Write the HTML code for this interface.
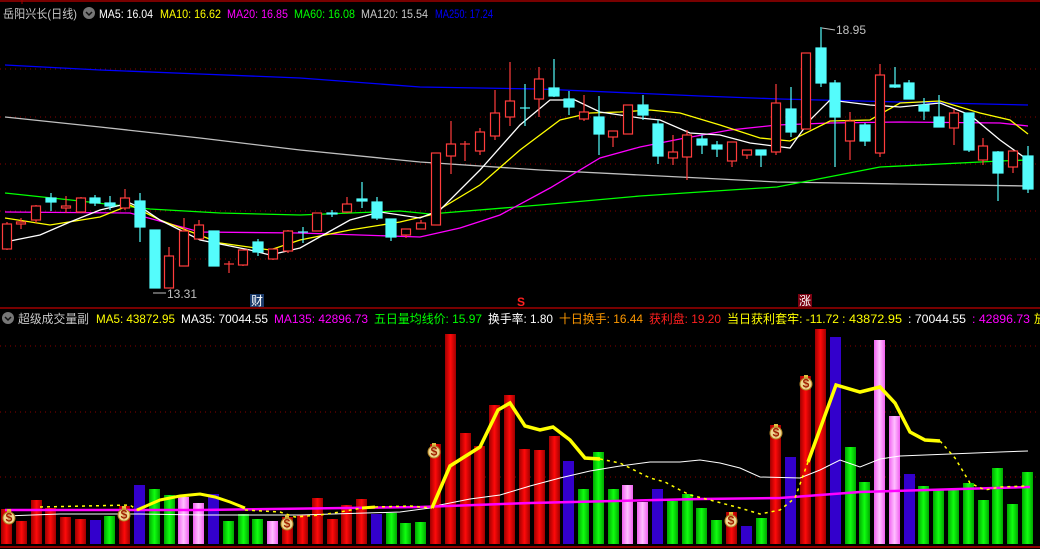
<!DOCTYPE html>
<html><head><meta charset="utf-8"><style>
html,body{margin:0;padding:0;background:#000;}
svg{display:block;}
text{font-family:"Liberation Sans","Noto Sans CJK SC",sans-serif;font-size:12px;}
</style></head><body>
<svg width="1040" height="549" viewBox="0 0 1040 549" xmlns="http://www.w3.org/2000/svg">
<defs>
<linearGradient id="gr" x1="0" x2="1"><stop offset="0" stop-color="#a00000"/><stop offset="0.5" stop-color="#ff0a0a"/><stop offset="1" stop-color="#a00000"/></linearGradient>
<linearGradient id="gg" x1="0" x2="1"><stop offset="0" stop-color="#00a800"/><stop offset="0.5" stop-color="#10ff10"/><stop offset="1" stop-color="#00a800"/></linearGradient>
<linearGradient id="gp" x1="0" x2="1"><stop offset="0" stop-color="#f060f0"/><stop offset="0.5" stop-color="#ffc0ff"/><stop offset="1" stop-color="#f060f0"/></linearGradient>
</defs>
<rect width="1040" height="549" fill="#000"/>
<line x1="0" y1="1" x2="1040" y2="1" stroke="#a00000" stroke-width="1.5"/>
<line x1="22" y1="0" x2="22" y2="4" stroke="#a00000"/>
<g stroke="#8a0000" stroke-dasharray="1,4" stroke-width="1">
<line x1="0" y1="69" x2="1040" y2="69"/><line x1="0" y1="117" x2="1040" y2="117"/><line x1="0" y1="164" x2="1040" y2="164"/><line x1="0" y1="211" x2="1040" y2="211"/><line x1="0" y1="259" x2="1040" y2="259"/>
<line x1="0" y1="346" x2="1040" y2="346"/><line x1="0" y1="412" x2="1040" y2="412"/><line x1="0" y1="477" x2="1040" y2="477"/>
</g>
<line x1="0" y1="308" x2="1040" y2="308" stroke="#a00000" stroke-width="1.5"/>
<line x1="0" y1="547" x2="1040" y2="547" stroke="#c00000" stroke-width="1.5"/>

<g fill="none" stroke-width="1.3">
<polyline stroke="#0000ff" points="5,65 100,70 200,74 300,78 420,87 540,89 700,96 780,99 900,102 1028,105"/>
<polyline stroke="#c0c0c0" points="5,117 100,127 200,138 300,150 420,162 540,170 640,175 700,178 777,182 900,184 1028,186"/>
<polyline stroke="#00ff00" points="5,193 80,201 150,209 220,213 300,215 400,211 430,214 540,205 640,196 700,192 777,187 880,167 1000,161 1028,160"/>
<polyline stroke="#ff00ff" points="5,212 130,213 200,232 300,233 420,237 460,228 500,215 550,188 600,158 640,147 680,139 730,130 777,125 830,123 900,122 1000,123 1028,126"/>
<polyline stroke="#ffff00" points="5,218 50,225 100,217 130,205 160,220 220,243 270,250 300,240 350,230 400,222 430,215 480,185 520,150 560,120 590,113 620,112 650,110 680,113 720,125 760,138 790,141 830,121 870,120 900,103 940,101 980,113 1010,120 1028,134"/>
<polyline stroke="#ffffff" points="5,242 40,235 70,222 100,210 130,203 145,210 160,220 200,240 250,250 270,255 300,248 350,220 380,212 420,218 440,210 480,170 520,125 550,100 575,100 600,112 640,118 660,120 690,133 720,135 750,143 790,148 810,120 830,100 870,105 900,107 940,103 970,115 1000,140 1028,160"/>
</g>

<g stroke="#ff3c3c" stroke-width="1.2" fill="#000">
<line x1="7" y1="222" x2="7" y2="250"/><rect x="2.5" y="224" width="9" height="25"/>
<line x1="21" y1="218" x2="21" y2="229"/><rect x="16.5" y="222" width="9" height="2"/>
<line x1="36" y1="205" x2="36" y2="223"/><rect x="31.5" y="206" width="9" height="14"/>
<line x1="66" y1="196" x2="66" y2="213"/><rect x="61.5" y="206" width="9" height="2"/>
<line x1="81" y1="197" x2="81" y2="213"/><rect x="76.5" y="198" width="9" height="14"/>
<line x1="125" y1="189" x2="125" y2="210"/><rect x="120.5" y="198" width="9" height="10"/>
<line x1="169" y1="247" x2="169" y2="288"/><rect x="164.5" y="256" width="9" height="32"/>
<line x1="184" y1="218" x2="184" y2="266"/><rect x="179.5" y="231" width="9" height="35"/>
<line x1="199" y1="220" x2="199" y2="239"/><rect x="194.5" y="225" width="9" height="14"/>
<line x1="229" y1="261" x2="229" y2="273"/><line x1="224" y1="264" x2="234" y2="264"/>
<line x1="243" y1="250" x2="243" y2="266"/><rect x="238.5" y="250" width="9" height="15"/>
<line x1="273" y1="249" x2="273" y2="260"/><rect x="268.5" y="249" width="9" height="10"/>
<line x1="288" y1="230" x2="288" y2="253"/><rect x="283.5" y="231" width="9" height="20"/>
<rect x="312.5" y="213" width="9" height="18"/>
<line x1="347" y1="197" x2="347" y2="213"/><rect x="342.5" y="204" width="9" height="8"/>
<line x1="406" y1="229" x2="406" y2="238"/><rect x="401.5" y="229" width="9" height="6"/>
<line x1="421" y1="220" x2="421" y2="229"/><rect x="416.5" y="223" width="9" height="6"/>
<rect x="431.5" y="153" width="9" height="72"/>
<line x1="451" y1="121" x2="451" y2="174"/><rect x="446.5" y="144" width="9" height="12"/>
<line x1="465" y1="141" x2="465" y2="161"/><line x1="460" y1="144" x2="470" y2="144"/>
<line x1="480" y1="128" x2="480" y2="155"/><rect x="475.5" y="132" width="9" height="19"/>
<line x1="495" y1="90" x2="495" y2="140"/><rect x="490.5" y="113" width="9" height="23"/>
<line x1="510" y1="62" x2="510" y2="126"/><rect x="505.5" y="101" width="9" height="16"/>
<line x1="539" y1="67" x2="539" y2="117"/><rect x="534.5" y="79" width="9" height="20"/>
<line x1="584" y1="95" x2="584" y2="121"/><rect x="579.5" y="112" width="9" height="7"/>
<line x1="613" y1="131" x2="613" y2="147"/><rect x="608.5" y="131" width="9" height="6"/>
<rect x="623.5" y="105" width="9" height="29"/>
<line x1="673" y1="135" x2="673" y2="165"/><rect x="668.5" y="152" width="9" height="6"/>
<line x1="687" y1="130" x2="687" y2="180"/><rect x="682.5" y="135" width="9" height="22"/>
<line x1="732" y1="142" x2="732" y2="167"/><rect x="727.5" y="142" width="9" height="19"/>
<line x1="747" y1="150" x2="747" y2="159"/><rect x="742.5" y="150" width="9" height="5"/>
<line x1="776" y1="84" x2="776" y2="155"/><rect x="771.5" y="103" width="9" height="49"/>
<rect x="801.5" y="53" width="9" height="76"/>
<line x1="850" y1="112" x2="850" y2="160"/><rect x="845.5" y="121" width="9" height="20"/>
<line x1="880" y1="64" x2="880" y2="157"/><rect x="875.5" y="75" width="9" height="78"/>
<line x1="954" y1="109" x2="954" y2="145"/><rect x="949.5" y="113" width="9" height="15"/>
<line x1="983" y1="138" x2="983" y2="165"/><rect x="978.5" y="146" width="9" height="14"/>
<line x1="1013" y1="151" x2="1013" y2="173"/><rect x="1008.5" y="151" width="9" height="16"/>
</g>
<g stroke="#54fcfc" stroke-width="1.2" fill="#54fcfc">
<line x1="51" y1="193" x2="51" y2="211"/><rect x="46" y="198" width="10" height="4"/>
<line x1="95" y1="195" x2="95" y2="206"/><rect x="90" y="198" width="10" height="5"/>
<line x1="110" y1="196" x2="110" y2="210"/><rect x="105" y="203" width="10" height="3"/>
<line x1="140" y1="193" x2="140" y2="242"/><rect x="135" y="201" width="10" height="26"/>
<rect x="150" y="230" width="10" height="58"/>
<rect x="209" y="231" width="10" height="35"/>
<line x1="258" y1="239" x2="258" y2="256"/><rect x="253" y="242" width="10" height="10"/>
<line x1="303" y1="227" x2="303" y2="243"/><line x1="298" y1="232" x2="308" y2="232"/>
<line x1="332" y1="210" x2="332" y2="217"/><rect x="327" y="213" width="10" height="1"/>
<line x1="362" y1="182" x2="362" y2="208"/><rect x="357" y="199" width="10" height="2"/>
<line x1="377" y1="197" x2="377" y2="220"/><rect x="372" y="202" width="10" height="16"/>
<line x1="391" y1="219" x2="391" y2="241"/><rect x="386" y="219" width="10" height="18"/>
<line x1="525" y1="84" x2="525" y2="126"/><line x1="520" y1="108" x2="530" y2="108"/>
<line x1="554" y1="59" x2="554" y2="97"/><rect x="549" y="88" width="10" height="8"/>
<line x1="569" y1="91" x2="569" y2="115"/><rect x="564" y="99" width="10" height="8"/>
<line x1="599" y1="96" x2="599" y2="155"/><rect x="594" y="117" width="10" height="17"/>
<line x1="643" y1="95" x2="643" y2="120"/><rect x="638" y="105" width="10" height="10"/>
<line x1="658" y1="120" x2="658" y2="164"/><rect x="653" y="124" width="10" height="32"/>
<line x1="702" y1="135" x2="702" y2="154"/><rect x="697" y="139" width="10" height="6"/>
<line x1="717" y1="141" x2="717" y2="157"/><rect x="712" y="145" width="10" height="4"/>
<line x1="761" y1="150" x2="761" y2="167"/><rect x="756" y="150" width="10" height="5"/>
<line x1="791" y1="87" x2="791" y2="137"/><rect x="786" y="109" width="10" height="23"/>
<line x1="821" y1="27" x2="821" y2="87"/><rect x="816" y="48" width="10" height="35"/>
<line x1="835" y1="80" x2="835" y2="167"/><rect x="830" y="83" width="10" height="34"/>
<line x1="865" y1="123" x2="865" y2="146"/><rect x="860" y="125" width="10" height="16"/>
<line x1="895" y1="67" x2="895" y2="88"/><rect x="890" y="85" width="10" height="2"/>
<line x1="909" y1="80" x2="909" y2="99"/><rect x="904" y="83" width="10" height="16"/>
<line x1="924" y1="98" x2="924" y2="120"/><rect x="919" y="105" width="10" height="6"/>
<line x1="939" y1="95" x2="939" y2="127"/><rect x="934" y="117" width="10" height="10"/>
<line x1="969" y1="113" x2="969" y2="152"/><rect x="964" y="113" width="10" height="37"/>
<line x1="998" y1="151" x2="998" y2="201"/><rect x="993" y="152" width="10" height="21"/>
<line x1="1028" y1="146" x2="1028" y2="193"/><rect x="1023" y="156" width="10" height="33"/>
</g>
<g fill="#c0c0c0" stroke="none">
<text x="836" y="34">18.95</text>
<text x="167" y="298">13.31</text>
</g>
<g stroke="#c0c0c0" stroke-width="1"><line x1="822" y1="28" x2="835" y2="30"/><line x1="153" y1="293" x2="166" y2="293"/></g>

<rect x="250" y="294" width="14" height="13" fill="#1a3a6a"/><text x="251" y="305" fill="#fff" font-size="11">财</text>
<text x="517" y="306" fill="#ff2020" font-weight="bold">S</text>
<rect x="798" y="294" width="14" height="13" fill="#7a0010"/><text x="799" y="305" fill="#fff" font-size="11">涨</text>

<g fill="url(#gr)">
<rect x="1" y="509" width="11" height="35"/><rect x="16" y="521" width="11" height="23"/><rect x="31" y="500" width="11" height="44"/><rect x="45" y="508" width="11" height="36"/><rect x="60" y="517" width="11" height="27"/><rect x="75" y="519" width="11" height="25"/><rect x="119" y="506" width="11" height="38"/>
<rect x="282" y="517" width="11" height="27"/><rect x="297" y="515" width="11" height="29"/><rect x="312" y="498" width="11" height="46"/><rect x="327" y="519" width="11" height="25"/><rect x="341" y="505" width="11" height="39"/><rect x="356" y="499" width="11" height="45"/>
<rect x="430" y="444" width="11" height="100"/><rect x="445" y="334" width="11" height="210"/><rect x="460" y="433" width="11" height="111"/><rect x="474" y="446" width="11" height="98"/><rect x="489" y="405" width="11" height="139"/><rect x="504" y="395" width="11" height="149"/><rect x="519" y="449" width="11" height="95"/><rect x="534" y="450" width="11" height="94"/><rect x="549" y="436" width="11" height="108"/>
<rect x="726" y="512" width="11" height="32"/><rect x="770" y="425" width="11" height="119"/><rect x="800" y="376" width="11" height="168"/><rect x="815" y="329" width="11" height="215"/>
</g>
<g fill="#3300cc">
<rect x="90" y="520" width="11" height="24"/><rect x="134" y="485" width="11" height="59"/><rect x="208" y="494" width="11" height="50"/><rect x="371" y="514" width="11" height="30"/><rect x="563" y="461" width="11" height="83"/><rect x="652" y="489" width="11" height="55"/><rect x="741" y="526" width="11" height="18"/><rect x="785" y="457" width="11" height="87"/><rect x="830" y="337" width="11" height="207"/><rect x="904" y="474" width="11" height="70"/>
</g>
<g fill="url(#gg)">
<rect x="104" y="516" width="11" height="28"/><rect x="149" y="489" width="11" height="55"/><rect x="164" y="495" width="11" height="49"/><rect x="223" y="521" width="11" height="23"/><rect x="238" y="514" width="11" height="30"/><rect x="252" y="519" width="11" height="25"/><rect x="386" y="513" width="11" height="31"/><rect x="400" y="523" width="11" height="21"/><rect x="415" y="522" width="11" height="22"/>
<rect x="578" y="489" width="11" height="55"/><rect x="593" y="452" width="11" height="92"/><rect x="608" y="489" width="11" height="55"/><rect x="667" y="501" width="11" height="43"/><rect x="682" y="494" width="11" height="50"/><rect x="696" y="508" width="11" height="36"/><rect x="711" y="520" width="11" height="24"/><rect x="756" y="518" width="11" height="26"/>
<rect x="845" y="447" width="11" height="97"/><rect x="859" y="482" width="11" height="62"/><rect x="918" y="486" width="11" height="58"/><rect x="933" y="489" width="11" height="55"/><rect x="948" y="490" width="11" height="54"/><rect x="963" y="483" width="11" height="61"/><rect x="978" y="500" width="11" height="44"/><rect x="992" y="468" width="11" height="76"/><rect x="1007" y="504" width="11" height="40"/><rect x="1022" y="472" width="11" height="72"/>
</g>
<g fill="url(#gp)">
<rect x="178" y="497" width="11" height="47"/><rect x="193" y="503" width="11" height="41"/><rect x="267" y="521" width="11" height="23"/><rect x="622" y="485" width="11" height="59"/><rect x="637" y="502" width="11" height="42"/><rect x="874" y="340" width="11" height="204"/><rect x="889" y="416" width="11" height="128"/>
</g>

<polyline fill="none" stroke="#ffffff" stroke-width="1" points="5,516 60,514 140,514 200,515 300,515 400,512 430,508 440,505 470,499 500,495 530,486 560,478 590,471 620,466 650,462 680,462 700,460 720,463 740,468 760,477 800,478 820,470 840,460 860,467 880,459 900,456 950,454 1000,452 1028,451"/>
<polyline fill="none" stroke="#ff00ff" stroke-width="2.5" points="5,510 200,510 420,507 530,503 700,499 780,498 860,492 960,489 1030,487"/>
<g fill="none" stroke="#ffff00">
<polyline stroke-width="1.5" stroke-dasharray="3,4" points="40,507 130,505 137,510"/>
<polyline stroke-width="3" points="137,510 160,500 180,496 200,494 215,497 230,502 245,508"/>
<polyline stroke-width="1.5" stroke-dasharray="3,4" points="245,510 280,512 295,517 320,515 340,512 362,508"/>
<polyline stroke-width="3" points="362,508 375,507"/>
<polyline stroke-width="1.5" stroke-dasharray="3,4" points="375,507 410,506 432,508"/>
<polyline stroke-width="3.5" points="432,508 450,466 480,447 498,410 510,403 525,426 540,430 553,427 570,440 585,458 600,459"/>
<polyline stroke-width="1.5" stroke-dasharray="3,4" points="600,459 620,463 650,478 665,482 680,490 690,495 710,500 740,508 760,514 780,510 795,498 808,462"/>
<polyline stroke-width="3.5" points="808,462 836,385 860,392 880,387 895,403 910,432 925,440 940,441"/>
<polyline stroke-width="1.5" stroke-dasharray="3,4" points="940,441 955,458 970,483 985,490 1000,487 1028,486"/>
</g>
<g font-size="9" font-weight="bold" text-anchor="middle">
<g transform="translate(9,518)"><rect x="-2" y="-9" width="4" height="3" fill="#e0c040"/><circle r="6" fill="#f0d890" stroke="#b08020"/><text y="3.5" fill="#a02000" font-size="9">$</text></g>
<g transform="translate(124,515)"><rect x="-2" y="-9" width="4" height="3" fill="#e0c040"/><circle r="6" fill="#f0d890" stroke="#b08020"/><text y="3.5" fill="#a02000" font-size="9">$</text></g>
<g transform="translate(287,524)"><rect x="-2" y="-9" width="4" height="3" fill="#e0c040"/><circle r="6" fill="#f0d890" stroke="#b08020"/><text y="3.5" fill="#a02000" font-size="9">$</text></g>
<g transform="translate(434,452)"><rect x="-2" y="-9" width="4" height="3" fill="#e0c040"/><circle r="6" fill="#f0d890" stroke="#b08020"/><text y="3.5" fill="#a02000" font-size="9">$</text></g>
<g transform="translate(731,521)"><rect x="-2" y="-9" width="4" height="3" fill="#e0c040"/><circle r="6" fill="#f0d890" stroke="#b08020"/><text y="3.5" fill="#a02000" font-size="9">$</text></g>
<g transform="translate(776,433)"><rect x="-2" y="-9" width="4" height="3" fill="#e0c040"/><circle r="6" fill="#f0d890" stroke="#b08020"/><text y="3.5" fill="#a02000" font-size="9">$</text></g>
<g transform="translate(806,384)"><rect x="-2" y="-9" width="4" height="3" fill="#e0c040"/><circle r="6" fill="#f0d890" stroke="#b08020"/><text y="3.5" fill="#a02000" font-size="9">$</text></g>
</g>

<rect x="0" y="4" width="560" height="16" fill="#000"/>
<text x="3" y="18" fill="#c8c8c8" textLength="74" lengthAdjust="spacingAndGlyphs">岳阳兴长(日线)</text>
<circle cx="89" cy="13" r="6" fill="#777"/><path d="M86 12 L89 15 L92 12" stroke="#111" stroke-width="1.5" fill="none"/>
<text x="99" y="18" fill="#ffffff" textLength="54" lengthAdjust="spacingAndGlyphs">MA5: 16.04</text>
<text x="160" y="18" fill="#ffff00" textLength="61" lengthAdjust="spacingAndGlyphs">MA10: 16.62</text>
<text x="227" y="18" fill="#ff00ff" textLength="61" lengthAdjust="spacingAndGlyphs">MA20: 16.85</text>
<text x="294" y="18" fill="#00ff00" textLength="61" lengthAdjust="spacingAndGlyphs">MA60: 16.08</text>
<text x="361" y="18" fill="#c8c8c8" textLength="67" lengthAdjust="spacingAndGlyphs">MA120: 15.54</text>
<text x="435" y="18" fill="#0000ff" textLength="58" lengthAdjust="spacingAndGlyphs">MA250: 17.24</text>

<rect x="0" y="310" width="1040" height="16" fill="#000"/>
<circle cx="8" cy="318" r="6" fill="#777"/><path d="M5 317 L8 320 L11 317" stroke="#111" stroke-width="1.5" fill="none"/>
<text x="18" y="323" fill="#c8c8c8" textLength="71" lengthAdjust="spacingAndGlyphs">超级成交量副</text>
<text x="96" y="323" fill="#ffff00" textLength="79" lengthAdjust="spacingAndGlyphs">MA5: 43872.95</text>
<text x="181" y="323" fill="#ffffff" textLength="87" lengthAdjust="spacingAndGlyphs">MA35: 70044.55</text>
<text x="274" y="323" fill="#ff00ff" textLength="94" lengthAdjust="spacingAndGlyphs">MA135: 42896.73</text>
<text x="374" y="323" fill="#00ff00" textLength="108" lengthAdjust="spacingAndGlyphs">五日量均线价: 15.97</text>
<text x="488" y="323" fill="#ffffff" textLength="65" lengthAdjust="spacingAndGlyphs">换手率: 1.80</text>
<text x="559" y="323" fill="#ff9900" textLength="84" lengthAdjust="spacingAndGlyphs">十日换手: 16.44</text>
<text x="649" y="323" fill="#ff2020" textLength="72" lengthAdjust="spacingAndGlyphs">获利盘: 19.20</text>
<text x="727" y="323" fill="#ffff00" textLength="112" lengthAdjust="spacingAndGlyphs">当日获利套牢: -11.72</text>
<text x="842" y="323" fill="#ffff00" textLength="60" lengthAdjust="spacingAndGlyphs">: 43872.95</text>
<text x="908" y="323" fill="#ffffff" textLength="58" lengthAdjust="spacingAndGlyphs">: 70044.55</text>
<text x="972" y="323" fill="#ff00ff" textLength="58" lengthAdjust="spacingAndGlyphs">: 42896.73</text>
<text x="1034" y="323" fill="#ffff00">放</text>
</svg>
</body></html>
